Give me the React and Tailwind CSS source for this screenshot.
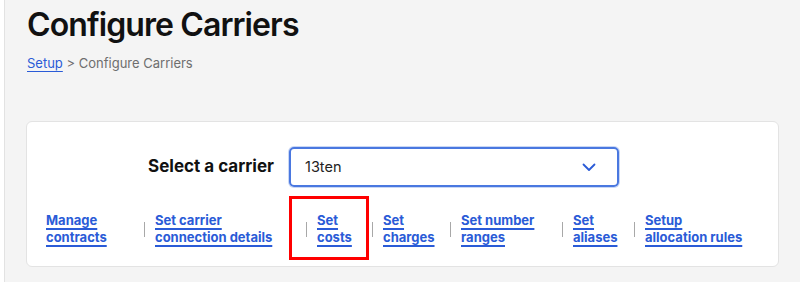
const links = [
  { lines: ['Manage', 'contracts'], w: 'w-[98px]' },
  { lines: ['Set carrier', 'connection details'], w: 'w-[151px]' },
  { lines: ['Set', 'costs'], w: 'w-[55px]', boxed: true },
  { lines: ['Set', 'charges'], w: 'w-[67px]' },
  { lines: ['Set number', 'ranges'], w: 'w-[101px]' },
  { lines: ['Set', 'aliases'], w: 'w-[61px]' },
  { lines: ['Setup', 'allocation rules'], w: 'w-[130px]' },
];

export default function App() {
  return (
    <div
      className="w-[800px] h-[282px] bg-white pl-[4px] overflow-hidden"
      style={{ fontFamily: 'Inter, "Noto Sans", sans-serif' }}
    >
      <div className="h-full bg-[#f4f4f4] border-l border-[#e2e2e2] pl-[21px] pr-[20px] pt-[5px]">
        <h1 className="pl-[1px] text-[32px] leading-[40px] font-semibold text-[#111] tracking-[-0.9px]">
          Configure Carriers
        </h1>
        <div className="pl-[1px] mt-[8px] text-[13px] leading-[20px] text-[#6e6e6e]">
          <a href="#" className="text-[#2a5bd7] underline underline-offset-[3px]">Setup</a>
          <span> &gt; Configure Carriers</span>
        </div>

        <div className="mt-[48px] w-[753px] h-[146px] bg-white border border-[#e3e3e3] rounded-[6px] pt-[25px] pl-[19px]">
          <div className="flex items-center">
            <div className="w-[243px] text-right text-[17px] font-bold text-[#111] pr-[15px]">
              Select a carrier
            </div>
            <div className="w-[330px] h-[40px] border-2 border-[#4a78e0] rounded-[5px] shadow-[0_0_0_1px_#c9d7f5] flex items-center justify-between pl-[14px] pr-[21px]">
              <span className="text-[14.5px] text-[#222]">13ten</span>
              <svg width="14" height="9" viewBox="0 0 14 9" fill="none">
                <path d="M1.5 1.5 L7 7 L12.5 1.5" stroke="#2a5bd7" strokeWidth="1.8" strokeLinecap="round" strokeLinejoin="round" />
              </svg>
            </div>
          </div>

          <div className="flex items-center mt-[25px]">
            {links.map((l, i) => (
              <div key={i} className="flex items-center">
                <div className={`${l.w} relative`}>
                  <a href="#" className="block text-[13px] leading-[17px] font-bold text-[#2a5bd7] underline decoration-[1.5px] underline-offset-[3px]">
                    {l.lines[0]}
                    <br />
                    {l.lines[1]}
                  </a>
                  {l.boxed && (
                    <div className="absolute left-[-28px] top-[-16px] w-[80px] h-[64px] border-[3px] border-[#f00]" />
                  )}
                </div>
                {i < links.length - 1 && (
                  <div className="w-[1px] h-[15px] bg-[#a8a8a8] mr-[10px]" />
                )}
              </div>
            ))}
          </div>
        </div>
      </div>
    </div>
  );
}
